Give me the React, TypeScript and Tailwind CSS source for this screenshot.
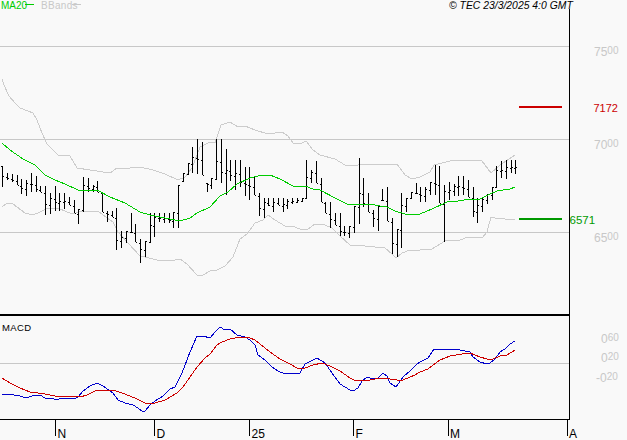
const GRID = "#c8c8c8";
const BAND = "#cccccc";

// bar ranges as [top, bottom], in 1/3 px measured down from y=150
const bars: [number, number][] = [
  [48, 112], [68, 90], [72, 95], [76, 105], [88, 133], [90, 138], [70, 125], [78, 125], [108, 125], [108, 196],
  [130, 193], [108, 182], [128, 182], [130, 178], [140, 165], [150, 190], [178, 223], [80, 185], [85, 125], [105, 125],
  [92, 125], [125, 185], [182, 215], [182, 200], [175, 300], [243, 295], [243, 280], [190, 247], [222, 275], [268, 340],
  [272, 320], [190, 275], [190, 260], [188, 215], [190, 220], [190, 220], [187, 233], [105, 233], [70, 92], [40, 75],
  [-9, 70], [-33, 72], [-24, 75], [100, 125],
  [85, 118], [-33, 88], [-33, 100], [-4, 135], [30, 92], [30, 120], [30, 110], [52, 137], [52, 150], [78, 135],
  [130, 198], [145, 203], [145, 168], [145, 185], [145, 165], [145, 187], [147, 177], [145, 162], [145, 160], [145, 155],
  [30, 145], [60, 100], [33, 98], [85, 157], [157, 190], [155, 235], [190, 225], [190, 257], [227, 257], [227, 265],
  [167, 248], [25, 222], [85, 172], [130, 187], [180, 230], [167, 242], [118, 150], [110, 213], [205, 312], [238, 322],
  [130, 295], [145, 187], [125, 145], [100, 130],
  [112, 155], [112, 157], [97, 135], [45, 135], [47, 158], [105, 277], [95, 150], [102, 138], [78, 138], [78, 135],
  [90, 140], [112, 202], [145, 220], [145, 187], [132, 162], [112, 150], [47, 112], [33, 85], [30, 87], [30, 70], [30, 72],
];

const upper = "2,79 4,85 9,96 15,103 20,108 28,111 33,113 37,120 42,133 47,144 53,150 58,155 70,156 77,168 90,170 110,173 117,168 130,168 140,167 153,170 165,174 178,180 185,177 192,168 197,155 200,147 210,142 215,143 221,125 230,122 238,127 245,126 255,130 268,134 282,132 288,136 293,143 300,144 306,141 313,150 320,155 335,159 345,165 358,165 370,164 397,164 405,175 412,179 420,177 430,172 434,165 450,161 465,160 482,161 491,173 500,165 515,155";
const lower = "2,207 7,203 13,204 25,213 33,215 40,212 48,208 60,209 72,214 83,211 98,211 107,218 113,222 118,232 128,243 140,256 145,257 157,260 175,260 180,259 187,264 197,275 203,275 210,271 217,270 225,266 233,257 240,239 247,234 255,223 263,220 268,215 275,220 285,226 292,226 300,229 308,229 315,224 325,225 332,228 340,236 350,245 365,246 385,248 392,254 396,258 402,253 410,250 420,250 432,249 440,244 445,241 460,240 468,237 482,238 487,232 491,217 495,218 505,219 515,220";
const ma20 = "2,143 10,150 23,159 35,165 45,175 55,180 65,184 78,190 97,190 110,197 125,203 140,212 150,215 165,218 180,221 190,218 197,213 210,207 220,196 228,192 237,184 250,178 262,175 270,175 280,179 293,186 305,186 313,189 320,190 335,198 347,204 375,205 380,206 385,206 395,211 405,214 415,215 420,214 432,209 447,202 458,201 470,199 478,200 490,194 497,191 510,189 515,187";
const macdBlue = "2,395 8,394 20,396 26,398 32,396 40,395 45,398 52,398 56,400 62,398 74,399 78,397 83,391 90,386 97,383 103,386 110,391 113,393 118,400 125,403 133,405 138,408 142,411 145,411 150,405 155,401 163,396 170,389 175,387 182,373 190,352 197,336 203,336 210,338 215,332 220,327 225,330 230,329 237,335 245,337 250,340 255,345 258,355 265,360 272,367 278,371 285,374 300,373 305,364 313,360 317,358 325,363 332,373 340,384 350,390 353,391 358,388 362,381 367,377 373,379 378,378 383,373 387,376 390,383 396,387 403,377 410,371 417,364 420,362 428,358 434,349 440,350 455,349 465,351 470,352 473,357 480,362 487,364 490,363 495,359 500,352 505,349 510,344 515,341";
const macdRed = "2,378 10,383 20,388 30,392 45,394 55,396 80,397 87,395 97,390 113,390 122,393 135,398 145,403 155,403 165,400 177,393 183,387 190,377 197,367 205,358 210,354 217,345 222,342 230,339 240,337 250,338 255,340 260,344 270,352 280,359 290,364 297,368 305,368 313,365 322,363 330,366 340,371 350,378 356,381 370,380 380,378 390,379 397,380 403,380 415,375 420,372 428,369 440,360 450,356 462,354 470,353 480,357 487,359 493,359 500,356 507,355 515,350";

const clamp = (v: number, a: number, b: number) => Math.min(b, Math.max(a, v));

function PriceBars() {
  let lastClose = 150 + bars[0][0] / 3;
  return (
    <g stroke="#000" strokeWidth={1} shapeRendering="crispEdges">
      {bars.map(([t, b], i) => {
        const x = Math.round(2.3 + 4.75 * i) + 0.5;
        const top = 150 + t / 3;
        const bottom = 150 + b / 3;
        const next = bars[i + 1] || [t, b];
        const open = Math.round(clamp(lastClose, top, bottom)) + 0.5;
        const close = Math.round(clamp(150 + (next[0] + next[1]) / 6, top, bottom)) + 0.5;
        lastClose = close;
        return (
          <g key={i}>
            <line x1={x} x2={x} y1={Math.round(top)} y2={Math.round(bottom)} />
            <line x1={x - 1.5} x2={x} y1={open} y2={open} />
            <line x1={x} x2={x + 1.5} y1={close} y2={close} />
          </g>
        );
      })}
    </g>
  );
}

// first digit big, the rest small and raised: how the chart's bitmap font draws them
function AxisNum({ x, y, big, small, color = "#c8c8c8" }: { x: number; y: number; big: string; small: string; color?: string }) {
  return (
    <text x={x} y={y} fill={color} fontSize={12}>
      {big}
      <tspan fontSize={10} dy={-2}>{small}</tspan>
    </text>
  );
}

export default function App() {
  return (
    <div className="w-[627px] h-[440px] bg-[#f9f9f9] flex flex-col overflow-hidden font-['Liberation_Sans',sans-serif]">
      <svg className="block w-[627px] h-[316px] shrink-0" viewBox="0 0 627 316">
        <g stroke={GRID} shapeRendering="crispEdges">
          <line x1={0} x2={569} y1={46.5} y2={46.5} />
          <line x1={0} x2={569} y1={139.5} y2={139.5} />
          <line x1={0} x2={569} y1={232.5} y2={232.5} />
        </g>
        <polyline points={upper} fill="none" stroke={BAND} shapeRendering="crispEdges" />
        <polyline points={lower} fill="none" stroke={BAND} shapeRendering="crispEdges" />
        <PriceBars />
        <polyline points={ma20} fill="none" stroke="#00cc00" shapeRendering="crispEdges" />

        <text x={1} y={8.5} fill="#00cc00" fontSize={10}>MA20</text>
        <line x1={25} x2={34} y1={4.5} y2={4.5} stroke="#00cc00" shapeRendering="crispEdges" />
        <text x={41} y={8.5} fill="#c8c8c8" fontSize={10} letterSpacing={0.3}>BBands</text>
        <line x1={72} x2={81} y1={4.5} y2={4.5} stroke="#c8c8c8" shapeRendering="crispEdges" />
        <text x={449} y={9} fill="#000" fontSize={10.4} fontStyle="italic">© TEC 23/3/2025 4:0 GMT</text>

        <line x1={519} x2={562} y1={107} y2={107} stroke="#cc0000" strokeWidth={2} shapeRendering="crispEdges" />
        <line x1={519} x2={562} y1={219} y2={219} stroke="#009900" strokeWidth={2} shapeRendering="crispEdges" />

        <AxisNum x={594} y={56} big="75" small="00" />
        <AxisNum x={594} y={149} big="70" small="00" />
        <AxisNum x={594} y={242} big="65" small="00" />
        <text x={593.5} y={112} fill="#cc0000" fontSize={11}>7172</text>
        <text x={569.5} y={224} fill="#009900" fontSize={11.5}>6571</text>

        <line x1={569.5} x2={569.5} y1={9} y2={316} stroke="#000" shapeRendering="crispEdges" />
        <line x1={0} x2={569} y1={315} y2={315} stroke="#000" strokeWidth={2} shapeRendering="crispEdges" />
      </svg>

      <svg className="block w-[627px] h-[104px] shrink-0" viewBox="0 316 627 104">
        <line x1={0} x2={569} y1={363.5} y2={363.5} stroke={GRID} shapeRendering="crispEdges" />
        <polyline points={macdBlue} fill="none" stroke="#0000cc" shapeRendering="crispEdges" />
        <polyline points={macdRed} fill="none" stroke="#cc0000" shapeRendering="crispEdges" />
        <text x={2} y={331} fill="#000" fontSize={9.5} letterSpacing={0.4}>MACD</text>
        <AxisNum x={601} y={343} big="0" small="60" />
        <AxisNum x={601} y={362} big="0" small="20" />
        <AxisNum x={596} y={382} big="-0" small="20" />
        <line x1={569.5} x2={569.5} y1={316} y2={420} stroke="#000" shapeRendering="crispEdges" />
        <line x1={0} x2={570} y1={419.5} y2={419.5} stroke="#000" shapeRendering="crispEdges" />
      </svg>

      <svg className="block w-[627px] h-[20px] shrink-0" viewBox="0 420 627 20">
        <g stroke="#000" shapeRendering="crispEdges">
          <line x1={55.5} x2={55.5} y1={420} y2={436} />
          <line x1={154.5} x2={154.5} y1={420} y2={436} />
          <line x1={249.5} x2={249.5} y1={420} y2={436} />
          <line x1={353.5} x2={353.5} y1={420} y2={436} />
          <line x1={448.5} x2={448.5} y1={420} y2={436} />
          <line x1={567.5} x2={567.5} y1={420} y2={436} />
        </g>
        <g fill="#000" fontSize={12}>
          <text x={57.5} y={438}>N</text>
          <text x={156.5} y={438}>D</text>
          <text x={251.5} y={438}>25</text>
          <text x={355.5} y={438}>F</text>
          <text x={450} y={438}>M</text>
          <text x={569} y={438}>A</text>
        </g>
      </svg>
    </div>
  );
}
